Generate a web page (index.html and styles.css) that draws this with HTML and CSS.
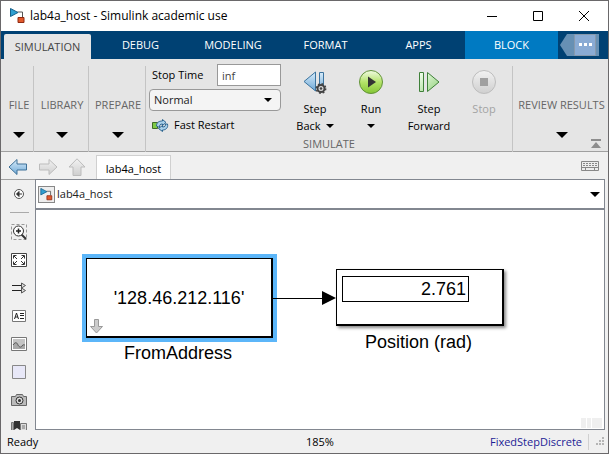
FILE: index.html
```html
<!DOCTYPE html>
<html lang="en">
<head>
<meta charset="utf-8">
<title>lab4a_host - Simulink academic use</title>
<link rel="stylesheet" href="styles.css">
</head>
<body>
<svg class="defs" width="0" height="0" aria-hidden="true">
  <defs>
    <linearGradient id="blue" x1="0" y1="0" x2="0" y2="1"><stop offset="0" stop-color="#d8ecfa"/><stop offset="1" stop-color="#6fa9d6"/></linearGradient>
    <linearGradient id="grey" x1="0" y1="0" x2="0" y2="1"><stop offset="0" stop-color="#f2f2f2"/><stop offset="1" stop-color="#cfcfcf"/></linearGradient>
    <linearGradient id="green" x1="0" y1="0" x2="0" y2="1"><stop offset="0" stop-color="#f2fbe4"/><stop offset=".5" stop-color="#b4e36a"/><stop offset="1" stop-color="#84c634"/></linearGradient>
    <linearGradient id="mint" x1="0" y1="0" x2="1" y2="1"><stop offset="0" stop-color="#f4fff0"/><stop offset="1" stop-color="#93d27c"/></linearGradient>
    <symbol id="caret" viewBox="0 0 12 6"><path d="M0 0h12L6 6z"/></symbol>
    <symbol id="model" viewBox="0 0 16 16"><path d="M8 4h5v5" fill="none" stroke="#555"/><path d="M1 .5v8L8.500 4.500z" fill="#2f9fd0" stroke="#17618c"/><path d="M8.500 9.500h6v5h-6z" fill="#e2592b" stroke="#8e2a12"/></symbol>
  </defs>
</svg>
<div class="window">
  <header class="titlebar">
    <svg class="app-icon" width="17" height="16"><use href="#model"/></svg>
    <h1>lab4a_host - Simulink academic use</h1>
    <button class="win-btn" aria-label="Minimize"><svg width="12" height="12"><path d="M1 6.500h10" stroke="#000"/></svg></button>
    <button class="win-btn" aria-label="Maximize"><svg width="12" height="12"><path d="M1.500 1.500h9v9h-9z" fill="none" stroke="#000"/></svg></button>
    <button class="win-btn" aria-label="Close"><svg width="12" height="12"><path d="M1 1l10 10M11 1L1 11" stroke="#000"/></svg></button>
  </header>

  <nav class="tabs">
    <button class="tab tab-active">SIMULATION</button>
    <button class="tab">DEBUG</button>
    <button class="tab tab-wide">MODELING</button>
    <button class="tab">FORMAT</button>
    <button class="tab">APPS</button>
    <button class="tab tab-block">BLOCK</button>
    <button class="more" aria-label="More"><svg width="39" height="22"><path d="M0 11L7 0h32v22H7z" fill="#6790b4"/><path d="M14.500.5h21v21h-21z" fill="#8aabd4" stroke="#8799ad"/><path d="M19 9h3v3h-3zM24 9h3v3h-3zM29 9h3v3h-3z" fill="#fff"/></svg></button>
  </nav>

  <section class="toolstrip">
    <button class="group">FILE<svg width="12" height="6"><use href="#caret"/></svg></button>
    <button class="group">LIBRARY<svg width="12" height="6"><use href="#caret"/></svg></button>
    <button class="group">PREPARE<svg width="12" height="6"><use href="#caret"/></svg></button>
    <div class="simulate">
      <div class="controls">
        <div class="settings">
          <div class="stop-row"><label for="stop">Stop Time</label><input id="stop" type="text" value="inf"></div>
          <div class="mode"><select aria-label="Simulation mode"><option>Normal</option></select><svg width="8" height="4"><use href="#caret"/></svg></div>
          <button class="restart"><svg width="17" height="13"><path d="M.5 3.500h5v6h-5z" fill="#7fcb45" stroke="#3d6b28"/><path d="M4.500 7c0-4 3-5 6-5V.5L14 3.500l-3.500 3V5C8 5 7.500 6 7.500 8.500zM15.500 5c1 4-2 6-5 6v1.500L6.500 9.500l4-3V8c2.500 0 3-1 3-3z" fill="#a9d0ea" stroke="#2c648f"/></svg>Fast Restart</button>
        </div>
        <button class="tool"><svg width="26" height="24"><path d="M13.500 2v19L2 11.500z" fill="url(#blue)" stroke="#3c749f"/><path d="M17.500 2.500h4v18h-4z" fill="url(#blue)" stroke="#3c749f"/><circle cx="19" cy="18.500" r="3.500" fill="#ddd" stroke="#444" stroke-width="2"/><circle cx="19" cy="18.500" r="4.700" fill="none" stroke="#444" stroke-width="1.500" stroke-dasharray="1.800 1.890"/><circle cx="19" cy="18.500" r="1.300" fill="#444"/></svg><span>Step</span><span>Back <svg width="8" height="4"><use href="#caret"/></svg></span></button>
        <button class="tool"><svg width="26" height="24"><circle cx="13" cy="12" r="11.500" fill="url(#green)" stroke="#63923b"/><path d="M10 6.500v11l8-5.500z" fill="#333"/></svg><span>Run</span><span><svg width="8" height="4"><use href="#caret"/></svg></span></button>
        <button class="tool tool-wide"><svg width="26" height="24"><path d="M3.500 2.500h4v19h-4zM11.500 2.500v19L23 12z" fill="url(#mint)" stroke="#3f8039"/></svg><span>Step</span><span>Forward</span></button>
        <button class="tool" disabled><svg width="26" height="24"><circle cx="13" cy="12" r="11.500" fill="url(#grey)" stroke="#bdbdbd"/><path d="M9 8h8v8H9z" fill="#a0a0a0"/></svg><span>Stop</span></button>
      </div>
      <div class="caption">SIMULATE</div>
    </div>
    <button class="group">REVIEW RESULTS<svg width="12" height="6"><use href="#caret"/></svg></button>
    <button class="collapse" aria-label="Collapse toolstrip"><svg width="12" height="11"><path d="M1 1h10v2H1zM1 10l5-6 5 6z" fill="#8d8d8d"/></svg></button>
  </section>

  <div class="docbar">
    <button aria-label="Back"><svg width="20" height="18"><path d="M1 9l8-7.500V6h9.500v6H9v4.500z" fill="url(#blue)" stroke="#3f7198"/></svg></button>
    <button aria-label="Forward"><svg width="20" height="18"><path d="M19 9l-8-7.500V6H1.500v6H11v4.500z" fill="url(#grey)" stroke="#bcbcbc"/></svg></button>
    <button aria-label="Up"><svg width="18" height="18"><path d="M9 .8L1 9h4v8.500h8V9h4z" fill="url(#grey)" stroke="#bcbcbc"/></svg></button>
    <a class="doc-tab" href="#model-canvas">lab4a_host</a>
    <button class="keyboard" aria-label="Keyboard"><svg width="20" height="12"><path d="M1.500 1.500h17v9h-17z" fill="#eee" stroke="#888"/><path d="M3 3.500h14M3 5.500h14" stroke="#888" stroke-dasharray="2 1"/><path d="M1 7.500h18M5.500 8v3M14.500 8v3" stroke="#888"/></svg></button>
  </div>

  <main class="workspace">
    <aside class="palette">
      <button aria-label="Hide browser"><svg width="16" height="16"><circle cx="8" cy="8" r="4.500" fill="#fff" stroke="#555"/><path d="M6 8h5M8 5.500L5.500 8 8 10.500z" fill="#333" stroke="#333"/></svg></button>
      <hr>
      <button aria-label="Zoom"><svg width="16" height="16"><path d="M.5.5h15v15H.5z" fill="none" stroke="#999" stroke-dasharray="3 2"/><path d="M10.500 10.500L15 15" stroke="#333" stroke-width="2"/><circle cx="7.500" cy="7" r="5" fill="#fff" stroke="#333"/><path d="M5 7h5M7.500 4.500v5" stroke="#222" stroke-width="1.500"/></svg></button>
      <button aria-label="Fit to view"><svg width="16" height="14"><path d="M.5.5h15v13H.5z" fill="#fff" stroke="#444"/><path d="M2.500 5.500v-3h3M10.500 2.500h3v3M2.500 8.500v3h3M10.500 11.500h3v-3M3 3l3 3M13 3l-3 3M3 11l3-3M13 11l-3-3" fill="none" stroke="#333"/></svg></button>
      <button aria-label="Sample time"><svg width="16" height="12"><path d="M1 3.500h10M1 8.500h10" stroke="#222"/><path d="M10.500 1v5l4-2.500zM10.500 6v5l4-2.500z" fill="#ddd" stroke="#555"/></svg></button>
      <button aria-label="Annotation"><svg width="16" height="12"><path d="M1.500.5h13v11h-13z" fill="#fff" stroke="#777"/><path d="M3.500 9L5.500 3l2 6M4 7h3M9 3.500h4M9 5.500h4M9 8.500h4" fill="none" stroke="#222"/></svg></button>
      <button aria-label="Image"><svg width="16" height="14"><path d="M.5.5h15v13H.5z" fill="#fff" stroke="#777"/><path d="M2 2h12v10H2z" fill="#c4c4c4"/><path d="M2 8c3-4 4-2 5 0s3 3 4 1 2-1 3-1v4H2z" fill="#a8a8a8"/><path d="M2 8c3-4 4-2 5 0s3 3 4 1 2-1 3-1" fill="none" stroke="#555"/></svg></button>
      <button aria-label="Area"><svg width="16" height="14"><path d="M1.500.5h13v13h-13z" fill="#e8e8f8" stroke="#888"/></svg></button>
      <button aria-label="Screenshot"><svg width="16" height="14"><path d="M.5 3.500h4l1-2h6l1 2h3v9H.5z" fill="#bbb" stroke="#666"/><circle cx="8.500" cy="7.500" r="3.500" fill="#ddd" stroke="#333"/><circle cx="8.500" cy="7.500" r="1.500" fill="#333"/></svg></button>
      <button aria-label="Model browser"><svg width="16" height="10"><path d="M.5 10V1.500h2V10" fill="#aaa" stroke="#777"/><path d="M3 0h6v9L6 7l-3 2z" fill="#333"/><path d="M9.500 2.500h6V10h-6zM11 5h3M11 7h3" fill="#ddd" stroke="#777"/></svg></button>
    </aside>
    <div class="editor">
      <div class="crumb">
        <span class="crumb-icon"><svg width="13" height="13" viewBox="0 0 16 16"><use href="#model" width="16" height="16"/></svg></span>
        <a href="#model-canvas">lab4a_host</a>
        <svg class="crumb-caret" width="10" height="5"><use href="#caret"/></svg>
      </div>
      <div class="canvas" id="model-canvas">
        <div class="block from">'128.46.212.116'<svg class="mask" width="14" height="15"><path d="M4.500.5h4v7h4L6.500 14l-6-6.500h4z" fill="#ccc" stroke="#999"/></svg></div>
        <div class="name from-name">FromAddress</div>
        <svg class="signal" width="64" height="16"><path d="M0 8.500h50" stroke="#000"/><path d="M49 1v14l14-7z"/></svg>
        <div class="block display"><output>2.761</output></div>
        <div class="name display-name">Position (rad)</div>
        <svg class="pager" width="22" height="10"><path d="M0 0h5v10H0zM6 0h4v10H6zM11 0h10v10H11z" fill="#efefef"/></svg>
      </div>
    </div>
  </main>

  <footer class="status">
    <span class="state">Ready</span><span class="zoom">185%</span><a href="#model-canvas">FixedStepDiscrete</a>
    <svg width="9" height="9"><path d="M6 0h2v2H6zM3 3h2v2H3zM6 3h2v2H6zM0 6h2v2H0zM3 6h2v2H3zM6 6h2v2H6z" fill="#b5b5b5"/></svg>
  </footer>
</div>
</body>
</html>
```
FILE: styles.css
```css
* { box-sizing: border-box; }
body { margin: 0; font: 11px/16px "Open Sans", "Noto Sans", sans-serif; color: #000; }
button { margin: 0; padding: 0; border: 0; background: none; font: inherit; color: inherit; }
svg { flex: none; }
.defs { position: absolute; }
.window { display: flex; flex-direction: column; height: 100vh; border: 1px solid #6a686a; background: #f0f0f0; }

.titlebar { display: flex; align-items: center; flex: none; height: 30px; background: #fff; padding: 0 1px 0 8px; }
.titlebar h1 { flex: 1; margin: 0 0 0 4px; font-size: 12px; font-weight: 400; white-space: nowrap; }
.win-btn { display: flex; align-items: center; justify-content: center; width: 46px; height: 30px; }

.tabs { display: flex; flex: none; height: 28px; background: #004173; }
.tab { flex: 0 1 93px; color: #fff; }
.tab-wide { flex-basis: 92px; }
.tab-active { flex-basis: 87px; margin: 3px 3px 0; border-radius: 2px 2px 0 0; background: #e5e5e5; color: #444; }
.tab-block { background: #007ac2; }
.more { display: flex; align-items: center; margin-left: 2px; }

.toolstrip { position: relative; display: grid; grid-template-columns: 32px 55px 57px 1fr 96px; flex: none; height: 93px; border-bottom: 1px solid #a0a0a0; background: #e5e5e5; }
.group, .simulate { display: flex; flex-direction: column; border-left: 1px solid; border-image: linear-gradient(transparent 8px, #c4c4c4 8px) 1; }
.group { align-items: center; gap: 19px; padding: 38px 0 0 2px; color: #666; white-space: nowrap; }
.group:first-child { border-left: 0; padding-left: 4px; }
.group svg { fill: #000; }
.controls { display: flex; height: 77px; padding-left: 3px; }
.settings { display: flex; flex-direction: column; gap: 3px; width: 132px; padding-top: 5px; margin-right: 6px; }
.stop-row { display: flex; align-items: center; justify-content: space-between; padding-left: 3px; }
.stop-row input { width: 64px; height: 22px; padding: 0 4px; border: 1px solid #999; background: #fff; font: inherit; color: #444; }
.mode { position: relative; display: flex; }
.mode select { flex: 1; height: 22px; padding: 0 4px; appearance: none; border: 1px solid #999; border-radius: 4px; background: #f4f4f4; font: inherit; color: #222; }
.mode svg { position: absolute; right: 9px; top: 9px; }
.restart { display: flex; align-items: center; gap: 5px; height: 22px; padding-left: 3px; white-space: nowrap; }
.tool { display: flex; flex-direction: column; align-items: center; width: 56px; padding-top: 11px; white-space: nowrap; }
.tool > svg { margin-bottom: 6px; }
.tool span { display: flex; align-items: center; gap: 5px; height: 17px; }
.tool-wide { width: 60px; }
.tool:disabled { width: 50px; color: #a3a3a3; }
.caption { text-align: center; color: #666; }
.collapse { position: absolute; right: 6px; bottom: 2px; display: flex; }

.docbar { display: flex; align-items: center; flex: none; height: 27px; padding: 3px 8px 0 7px; }
.docbar button { display: flex; margin-right: 10px; }
.doc-tab { align-self: stretch; width: 75px; border: 1px solid #d0d0d0; border-bottom: 0; background: #fff; line-height: 26px; text-align: center; color: #000; text-decoration: none; }
.docbar .keyboard { margin: 0 0 2px auto; }

.workspace { display: flex; flex: 1; min-height: 0; padding-right: 3px; }
.palette { display: flex; flex-direction: column; align-items: center; flex: none; width: 34px; overflow: hidden; border-top: 1px solid #a0a0a0; padding-left: 2px; }
.palette button { display: flex; align-items: center; justify-content: center; flex: none; height: 28px; }
.palette hr { width: 19px; margin: 4px 0 5px; border: 0; border-top: 1px solid #aaa; }
.palette button:last-child { height: 10px; margin-top: 7px; }
.editor { display: flex; flex-direction: column; flex: 1; border: 1px solid #828790; }
.crumb { display: flex; align-items: center; gap: 2px; flex: none; height: 30px; padding: 0 4px 0 2px; border-bottom: 2px solid #828790; background: #fff; }
.crumb-icon { display: flex; padding: 1px; border: 1px solid #888; background: #eee; }
.crumb a { color: #222; text-decoration: none; }
.crumb-caret { margin-left: auto; }

.canvas { position: relative; flex: 1; overflow: hidden; background: #fff; font: 18px/20px "Liberation Sans", Arial, sans-serif; }
.canvas > * { position: absolute; }
.block { border: 1px solid #000; background: #fff; }
.from { left: 50px; top: 48px; display: flex; align-items: center; justify-content: center; width: 187px; height: 80px; border-width: 1px 2px 2px 1px; outline: 4px solid #5cb6f9; }
.mask { position: absolute; left: 3px; bottom: 2px; }
.from-name { left: 88px; top: 133px; }
.signal { left: 237px; top: 80px; }
.display { left: 300px; top: 59px; width: 168px; height: 57px; padding: 6px 5px; border-width: 1px 2px 2px 1px; box-shadow: 2px 2px 3px #888; }
.display output { display: block; width: 127px; height: 26px; padding-right: 2px; border: 1px solid #000; line-height: 25px; text-align: right; }
.display-name { left: 329px; top: 122px; }
.pager { right: 1px; bottom: 1px; }

.status { display: flex; align-items: center; flex: none; height: 23px; padding: 0 3px 0 6px; }
.status .state { width: 50%; }
.status .zoom { margin-right: auto; }
.status a { margin-right: 7px; padding-right: 6px; border-right: 1px solid #d0d0d0; color: #1d1d96; text-decoration: none; }
```
